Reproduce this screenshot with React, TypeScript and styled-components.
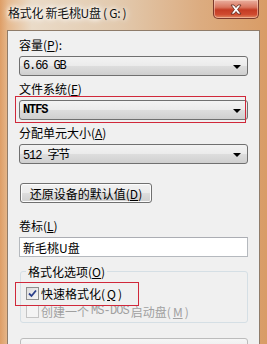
import styled, { createGlobalStyle } from 'styled-components';

const GlobalStyle = createGlobalStyle`
  html, body {
    margin: 0;
    padding: 0;
    background: #ffffff;
  }
  body {
    font-family: "Noto Sans CJK SC", "Liberation Sans", sans-serif;
    font-size: 12px;
    color: #000;
  }
`;

const W = {
  Frame: styled.div`
    position: relative;
    width: 267px;
    height: 344px;
    overflow: hidden;
    display: flex;
    flex-direction: column;
    background: linear-gradient(90deg, #de9e66 0%, #e6b98e 3%, #eadbc8 12%, #e2c9ad 45%, #dcac80 75%, #d99c66 100%);
  `,
  TitleBar: styled.div`
    height: 30px;
    flex: none;
    display: flex;
    align-items: flex-start;
    padding-left: 8px;
    box-sizing: border-box;
  `,
  Title: styled.div`
    margin-top: 5px;
    line-height: 16px;
    font-size: 12px;
    color: #111;
    letter-spacing: -0.3px;
    text-shadow: 0 0 4px #fff, 0 0 6px #fff, 0 0 8px rgba(255, 255, 255, 0.9);
  `,
  Close: styled.div`
    margin-left: auto;
    margin-right: 8px;
    width: 46px;
    height: 19px;
    box-sizing: border-box;
    border: 1px solid #7b3a2c;
    border-top: none;
    border-radius: 0 0 5px 5px;
    background: linear-gradient(180deg, #eab0a0 0%, #d9765f 40%, #c43c24 55%, #cf4a2f 80%, #e08a62 100%);
    box-shadow: inset 0 0 0 1px rgba(255, 220, 200, 0.5);
    display: flex;
    align-items: center;
    justify-content: center;
  `,
  Body: styled.div`
    flex: 1;
    padding: 0 7px;
    display: flex;
  `,
  Client: styled.div`
    flex: 1;
    border: 1px solid #8f7c6a;
    border-bottom: none;
    background: #f0f0f0;
    padding: 6px 11px 0 11px;
    display: flex;
    flex-direction: column;
  `,
};

const Label = styled.div`
  line-height: 15px;
  height: 15px;
  margin-bottom: 4px;
  white-space: nowrap;
`;

const Combo = styled.div<{ $last?: boolean; $bold?: boolean }>`
  height: 20px;
  box-sizing: border-box;
  border: 1px solid #707070;
  border-radius: 3px;
  background: linear-gradient(180deg, #f3f3f3 0%, #ebebeb 48%, #dddddd 52%, #cfcfcf 100%);
  display: flex;
  align-items: center;
  padding: 0 6px 0 3px;
  margin-bottom: ${({ $last }) => ($last ? '19px' : '5px')};
  font-family: "Liberation Mono", "Noto Sans CJK SC", monospace;
  font-size: 12px;
  font-weight: ${({ $bold }) => ($bold ? 700 : 400)};
  letter-spacing: -1.1px;
  white-space: nowrap;
`;

const ComboText = styled.span`
  flex: 1;
`;

const Arrow = styled.span`
  width: 0;
  height: 0;
  border-left: 4px solid transparent;
  border-right: 4px solid transparent;
  border-top: 4px solid #000;
  margin-top: 1px;
`;

const Button = styled.div`
  margin-left: 1px;
  width: 132px;
  height: 20px;
  box-sizing: border-box;
  border: 1px solid #707070;
  border-radius: 3px;
  background: linear-gradient(180deg, #f2f2f2 0%, #ebebeb 48%, #dddddd 52%, #cfcfcf 100%);
  box-shadow: inset 0 0 0 1px #fcfcfc;
  display: flex;
  align-items: center;
  justify-content: center;
  margin-bottom: 15px;
  white-space: nowrap;
`;

const TextBox = styled.div`
  height: 20px;
  box-sizing: border-box;
  border: 1px solid #b5b9be;
  border-top-color: #abadb3;
  background: #fff;
  display: flex;
  align-items: center;
  padding-left: 3px;
  margin-bottom: 7px;
`;

const Group = styled.fieldset`
  margin: 0 0 15px 1px;
  padding: 5px 0 2px 5px;
  border: 1px solid #d5dfe5;
  border-radius: 3px;
  min-width: 0;
`;

const Legend = styled.legend`
  padding: 0 2px;
  line-height: 15px;
  height: 15px;
`;

const CheckRow = styled.div<{ $disabled?: boolean }>`
  height: 18px;
  display: flex;
  align-items: center;
  gap: 2px;
  color: ${({ $disabled }) => ($disabled ? '#a0a0a0' : '#000')};
  white-space: nowrap;
`;

const Box = styled.span<{ $disabled?: boolean }>`
  width: 13px;
  height: 13px;
  box-sizing: border-box;
  border: 1px solid ${({ $disabled }) => ($disabled ? '#c4c4c4' : '#8e8f8f')};
  background: ${({ $disabled }) =>
    $disabled ? '#f4f4f4' : 'linear-gradient(135deg, #dcdcdc 0%, #f7f7f7 100%)'};
  display: flex;
  align-items: center;
  justify-content: center;
  flex: none;
`;

const Mono = styled.span`
  font-family: "Liberation Mono", monospace;
  font-size: 12px;
  letter-spacing: -0.9px;
`;

const Progress = styled.div`
  margin-left: 1px;
  height: 16px;
  border: 1px solid #bcbcbc;
  border-radius: 3px;
  background: linear-gradient(180deg, #f6f6f6, #e6e6e6);
`;

const Highlight = styled.div<{ $x: number; $y: number; $w: number; $h: number }>`
  position: absolute;
  left: ${({ $x }) => $x}px;
  top: ${({ $y }) => $y}px;
  width: ${({ $w }) => $w}px;
  height: ${({ $h }) => $h}px;
  box-sizing: border-box;
  border: 1px solid #d0283a;
  pointer-events: none;
`;

const CloseGlyph = () => (
  <svg width="14" height="11" viewBox="0 0 14 11">
    <path
      d="M2 1 L5 1 L7 3.5 L9 1 L12 1 L8.6 5.5 L12 10 L9 10 L7 7.5 L5 10 L2 10 L5.4 5.5 Z"
      fill="#fff"
      stroke="#5a2418"
      strokeWidth="0.8"
      strokeLinejoin="round"
    />
  </svg>
);

const Tick = () => (
  <svg width="9" height="9" viewBox="0 0 9 9">
    <path d="M1 4.5 L3.5 7 L8 1.5" fill="none" stroke="#2a3f8a" strokeWidth="1.8" />
  </svg>
);

export default function App() {
  return (
    <>
      <GlobalStyle />
      <W.Frame>
        <W.TitleBar>
          <W.Title>格式化 新毛桃U盘 ( G: )</W.Title>
          <W.Close>
            <CloseGlyph />
          </W.Close>
        </W.TitleBar>
        <W.Body>
          <W.Client>
            <Label>
              容量(<u>P</u>):
            </Label>
            <Combo>
              <ComboText>6.66 GB</ComboText>
              <Arrow />
            </Combo>
            <Label>
              文件系统(<u>F</u>)
            </Label>
            <Combo $bold>
              <ComboText>NTFS</ComboText>
              <Arrow />
            </Combo>
            <Label>
              分配单元大小(<u>A</u>)
            </Label>
            <Combo $last>
              <ComboText>512 字节</ComboText>
              <Arrow />
            </Combo>
            <Button>
              还原设备的默认值(<u>D</u>)
            </Button>
            <Label>
              卷标(<u>L</u>)
            </Label>
            <TextBox>新毛桃U盘</TextBox>
            <Group>
              <Legend>
                格式化选项(<u>O</u>)
              </Legend>
              <CheckRow>
                <Box>
                  <Tick />
                </Box>
                快速格式化(<u>Q</u>)
              </CheckRow>
              <CheckRow $disabled>
                <Box $disabled />
                创建一个 <Mono>MS-DOS</Mono> 启动盘(<u>M</u>)
              </CheckRow>
            </Group>
            <Progress />
          </W.Client>
        </W.Body>
        <Highlight $x={15} $y={96} $w={231} $h={27} />
        <Highlight $x={15} $y={282} $w={124} $h={24} />
      </W.Frame>
    </>
  );
}
